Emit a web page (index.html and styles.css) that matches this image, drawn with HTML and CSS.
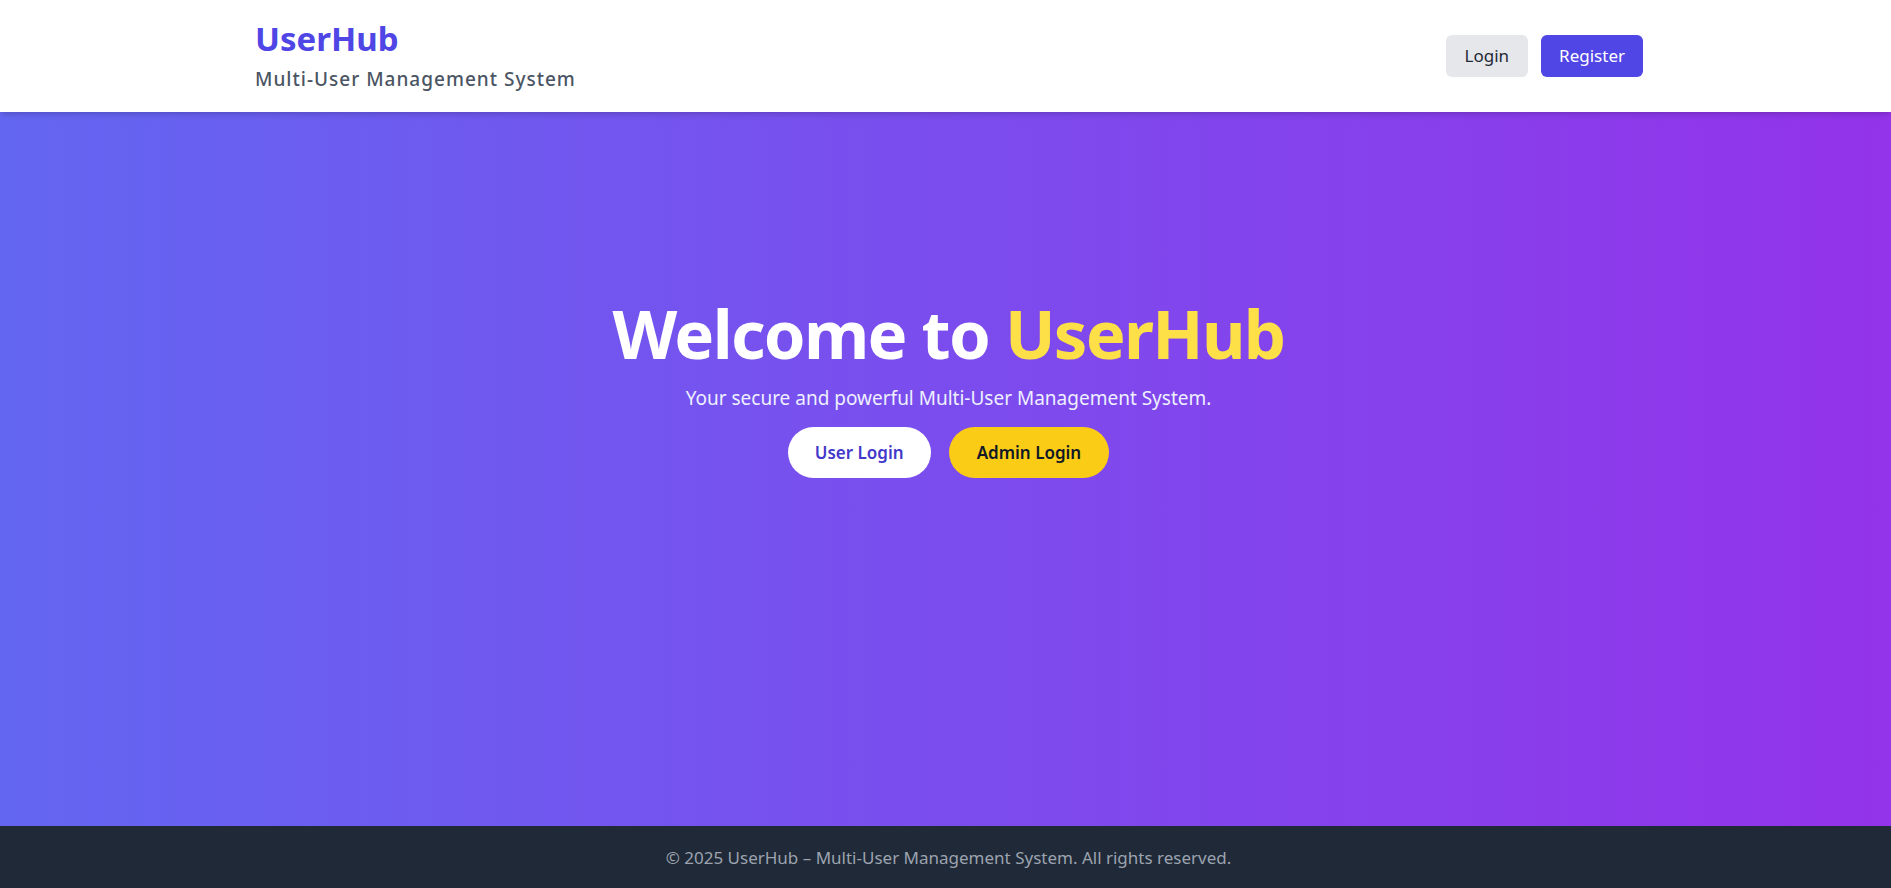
FILE: index.html
```html
<!DOCTYPE html>
<html lang="en">
<head>
<meta charset="utf-8">
<title>UserHub</title>
<link rel="stylesheet" href="styles.css">
</head>
<body>
<div class="page">
  <header class="site-header">
    <div class="container header-inner">
      <div class="brand">
        <h1 class="brand-title">UserHub</h1>
        <p class="brand-sub">Multi-User Management System</p>
      </div>
      <nav class="nav">
        <a class="btn btn-gray" href="#">Login</a>
        <a class="btn btn-indigo" href="#">Register</a>
      </nav>
    </div>
  </header>
  <main class="hero">
    <h2 class="hero-title">Welcome to <span class="accent">UserHub</span></h2>
    <p class="hero-sub">Your secure and powerful Multi-User Management System.</p>
    <div class="hero-actions">
      <a class="pill pill-white" href="#">User Login</a>
      <a class="pill pill-yellow" href="#">Admin Login</a>
    </div>
  </main>
  <footer class="site-footer">
    <p>© 2025 UserHub – Multi-User Management System. All rights reserved.</p>
  </footer>
</div>
</body>
</html>
```
FILE: styles.css
```css
* { box-sizing: border-box; }
html, body { margin: 0; padding: 0; }
body {
  font-family: "Noto Sans", "Open Sans", sans-serif;
  height: 888px;
}
a { text-decoration: none; }
.page {
  display: flex;
  flex-direction: column;
  height: 888px;
}
.site-header {
  background: #ffffff;
  height: 112px;
  padding-left: 6px;
  box-shadow: 0 4px 6px -1px rgba(0,0,0,0.12), 0 2px 4px -2px rgba(0,0,0,0.1);
  position: relative;
  z-index: 1;
  flex: none;
}
.container {
  max-width: 1389px;
  margin: 0 auto;
}
.header-inner {
  height: 100%;
  display: flex;
  align-items: center;
  justify-content: space-between;
}
.brand-title {
  margin: 0;
  padding-left: 1px;
  font-size: 33px;
  line-height: 40px;
  font-weight: 700;
  color: #4f46e5;
  position: relative;
  top: -2px;
}
.brand-sub {
  margin: 5px 0 0;
  padding-left: 1px;
  font-size: 19px;
  line-height: 26px;
  font-weight: 500;
  color: #4b5563;
  letter-spacing: 1px;
}
.nav {
  display: flex;
  gap: 13px;
  margin-top: -1px;
}
.btn {
  display: inline-flex;
  align-items: center;
  justify-content: center;
  height: 42px;
  padding: 0 19px;
  border-radius: 6px;
  font-size: 17px;
}
.btn-gray { background: #e5e7eb; color: #1f2937; }
.btn-indigo { background: #4f46e5; color: #ffffff; padding: 0 18px; }
.hero {
  flex: 1;
  background: linear-gradient(to right, #6366f1, #9333ea);
  display: flex;
  flex-direction: column;
  align-items: center;
  padding-top: 182px;
  padding-left: 6px;
  color: #ffffff;
}
.hero-title {
  margin: 0;
  font-size: 67px;
  line-height: 78px;
  font-weight: 700;
  letter-spacing: -1.7px;
}
.accent { color: #fde047; }
.hero-sub {
  margin: 12px 0 0;
  font-size: 19px;
  line-height: 28px;
  color: #eef0ff;
}
.hero-actions {
  margin-top: 15px;
  display: flex;
  gap: 18px;
}
.pill {
  display: inline-flex;
  align-items: center;
  justify-content: center;
  height: 51px;
  padding: 0 27px;
  border-radius: 999px;
  font-size: 17px;
  font-weight: 600;
}
.pill-white { background: #ffffff; color: #4338ca; }
.pill-yellow { background: #facc15; color: #111827; padding: 0 28px; }
.site-footer {
  flex: none;
  height: 62px;
  padding-left: 6px;
  background: #1f2937;
  display: flex;
  align-items: center;
  justify-content: center;
}
.site-footer p {
  margin: 0;
  font-size: 17px;
  color: #9ca3af;
}
```
